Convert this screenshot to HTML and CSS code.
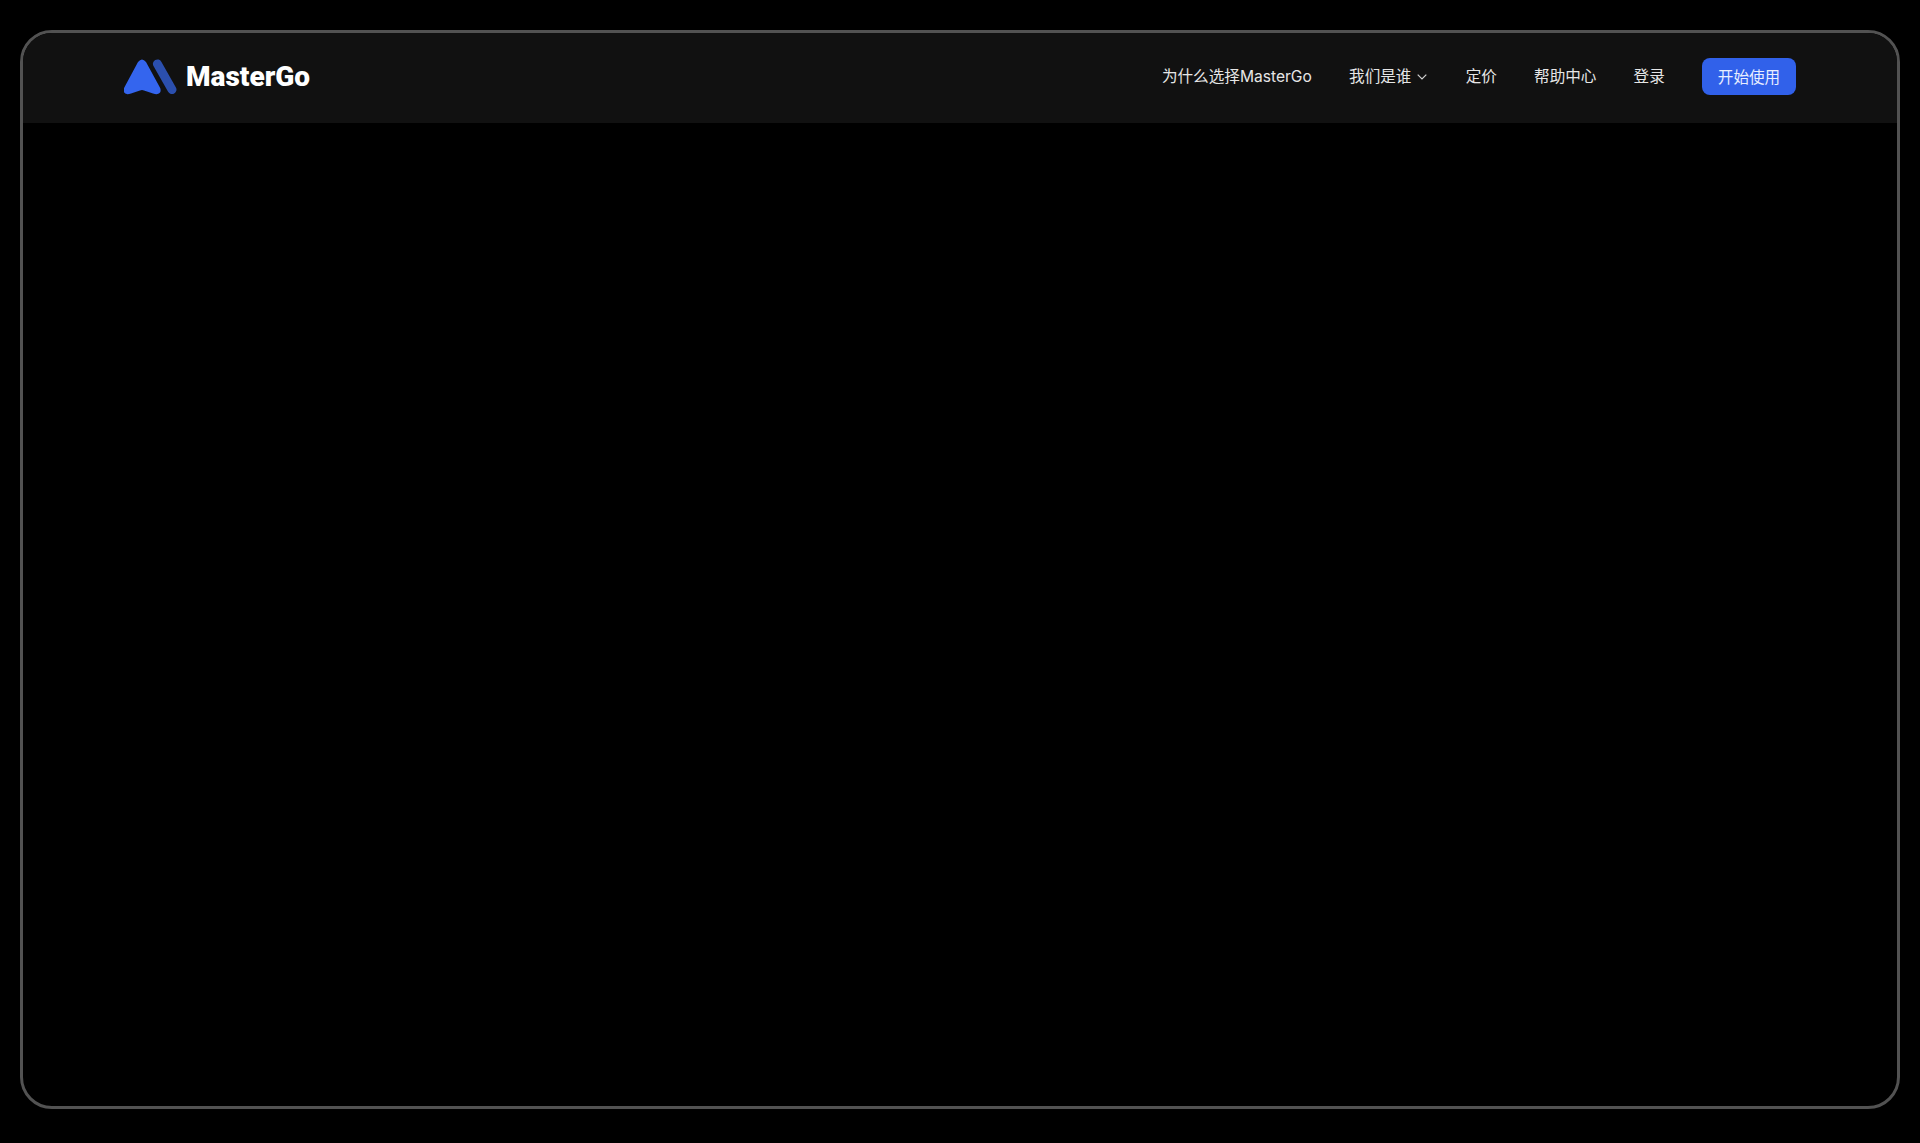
FILE: index.html
```html
<!DOCTYPE html>
<html lang="zh-CN">
<head>
    <meta charset="UTF-8">
    <meta name="viewport" content="width=device-width, initial-scale=1.0">
    <title>MasterGo</title>
    <link rel="stylesheet" href="styles.css">
</head>
<body>
<div class="container">
    <header class="header">
        <a class="logo">
            <svg class="logo-icon" width="54" height="36" viewBox="0 0 54 36">
                <path fill="#3465ee" d="M14 3 Q18 -2 22 3 L36.2 29 Q38 34.5 32.5 35.2 Q31 35.2 29 34.4 L20 31.4 Q18 30.8 16 31.4 L7 34.4 Q5 35.2 3.5 35.2 Q-2 34.5 0.3 28.6 Z"/>
                <path stroke="#2b4fae" stroke-width="9" stroke-linecap="round" d="M33.4 4.9 L48 30.6"/>
            </svg>
            <span class="logo-text">MasterGo</span>
        </a>
        <nav class="nav">
            <a>为什么选择MasterGo</a>
            <a class="more">我们是谁
                <svg width="10" height="6" viewBox="0 0 10 6">
                    <polyline points="0.7 0.7, 5 5, 9.3 0.7"/>
                </svg>
            </a>
            <a>定价</a>
            <a>帮助中心</a>
            <a>登录</a>
            <button class="start">开始使用</button>
        </nav>
    </header>
</div>
</body>
</html>
```

FILE: styles.css
```css
body {
    margin: 0;
    height: 100vh;
    box-sizing: border-box;
    padding: 30px 20px 34px;
    background-color: #000;
    font-family: Inter, "Noto Sans CJK SC", sans-serif;
}

.container {
    height: 100%;
    box-sizing: border-box;
    border: 3px solid #525252;
    border-radius: 32px;
    overflow: hidden;
}

.header {
    height: 90px;
    box-sizing: border-box;
    display: flex;
    justify-content: space-between;
    align-items: center;
    padding: 0 101px 3px 101px;
    background-color: #111;
}

.logo {
    display: flex;
    align-items: center;
}

.logo-icon {
    fill: none;
}

.logo-text {
    margin-left: 8px;
    color: #fff;
    font-family: Roboto, sans-serif;
    font-size: 28px;
    font-weight: 900;
    line-height: 36px;
}

.nav {
    display: flex;
    align-items: center;
    gap: 37.2px;
    color: #e6e6e6;
    font-size: 15.6px;
    line-height: 24px;
    white-space: nowrap;
}

.more {
    display: flex;
    align-items: center;
    gap: 6px;
    margin-right: 1px;
}
.more svg {
    fill: none;
    stroke: #d0d0d0;
    stroke-width: 1.2px;
}

.start {
    width: 94px;
    height: 37px;
    padding: 0 0 2px;
    border: none;
    border-radius: 8px;
    background-color: #3161ea;
    color: #e8eeff;
    font-family: inherit;
    font-size: 15.6px;
}
```
